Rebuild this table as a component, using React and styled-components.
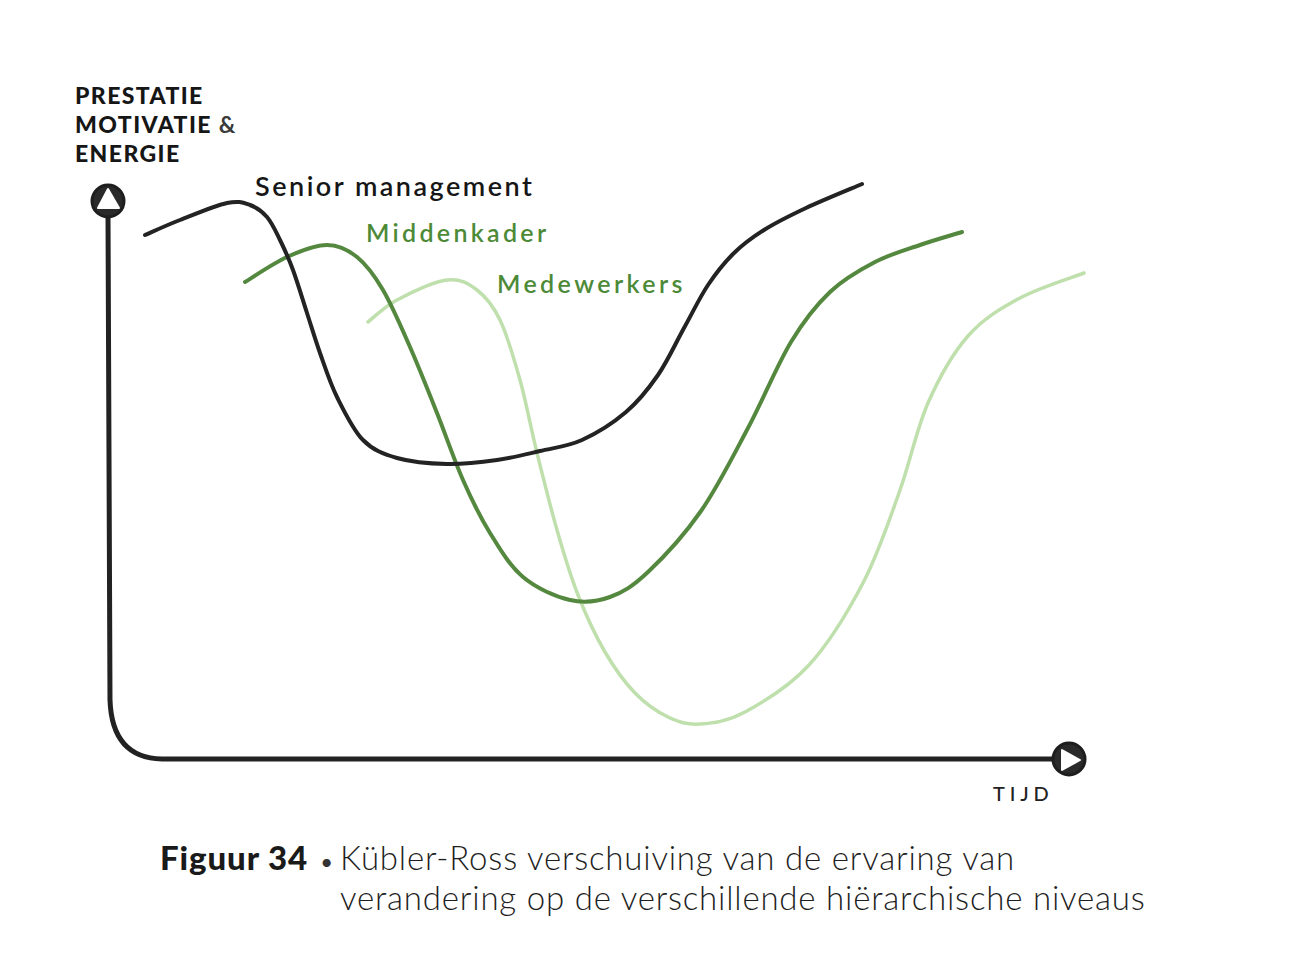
import React from "react";
import styled, { createGlobalStyle } from "styled-components";

const Global = createGlobalStyle`
  html, body { margin: 0; padding: 0; background: #ffffff; }
  body { font-family: "Lato", "Liberation Sans", sans-serif; color: #1c1c1c; }
`;

const Page = styled.div`
  width: 1300px;
  height: 973px;
  background: #ffffff;
  overflow: hidden;
`;

const AxisTitle = styled.div`
  padding: 81px 0 0 75px;
  font-size: 23px;
  line-height: 29px;
  font-weight: 900;
  letter-spacing: 1.4px;
  color: #161616;
`;

const Amp = styled.span`
  font-weight: 700;
  color: #3a3a3a;
`;

const Chart = styled.div`
  position: relative;
  width: 1300px;
  height: 660px;
`;

const Drawing = styled.svg`
  display: block;
`;

const Label = styled.div`
  position: absolute;
  left: ${(p) => p.$x}px;
  top: ${(p) => p.$y}px;
  font-size: ${(p) => p.$size}px;
  line-height: 1;
  font-weight: ${(p) => p.$weight || 600};
  color: ${(p) => p.$color || "#161616"};
  letter-spacing: ${(p) => p.$spacing || 0}px;
  white-space: nowrap;
`;

const Caption = styled.div`
  display: grid;
  grid-template-columns: 180px auto;
  justify-content: start;
  margin-top: 9px;
  padding-left: 160px;
  font-size: 33px;
  line-height: 40px;
  color: #1e1e1e;
`;

const CaptionLead = styled.div`
  display: flex;
  align-items: baseline;
  gap: 12px;
`;

const Fig = styled.span`
  font-weight: 900;
  color: #1a1a1a;
  letter-spacing: 0.9px;
`;

const Dot = styled.span`
  font-weight: 400;
  font-size: 22px;
  color: #333;
`;

const CaptionText = styled.div`
  font-weight: 300;
  letter-spacing: 0.8px;
`;

function smooth(pts) {
  let d = `M${pts[0][0]},${pts[0][1]}`;
  for (let i = 0; i < pts.length - 1; i++) {
    const p0 = pts[i - 1] || pts[i];
    const p1 = pts[i];
    const p2 = pts[i + 1];
    const p3 = pts[i + 2] || p2;
    const c1x = p1[0] + (p2[0] - p0[0]) / 6;
    const c1y = p1[1] + (p2[1] - p0[1]) / 6;
    const c2x = p2[0] - (p3[0] - p1[0]) / 6;
    const c2y = p2[1] - (p3[1] - p1[1]) / 6;
    d += ` C${c1x.toFixed(1)},${c1y.toFixed(1)} ${c2x.toFixed(1)},${c2y.toFixed(1)} ${p2[0]},${p2[1]}`;
  }
  return d;
}

const senior = [
  [145, 235], [180, 220], [227, 203], [250, 205], [267, 217], [280, 240],
  [293, 270], [307, 313], [320, 353], [337, 397], [363, 440], [397, 458],
  [447, 464], [497, 460], [540, 451], [582, 440], [626, 412], [658, 375],
  [684, 328], [708, 285], [733, 254], [764, 230], [806, 208], [862, 184],
];

const midden = [
  [245, 282], [287, 257], [327, 245], [357, 257], [383, 290], [410, 347],
  [437, 413], [463, 480], [490, 533], [523, 577], [570, 600], [610, 597],
  [648, 572], [701, 511], [748, 428], [791, 342], [830, 292], [875, 262],
  [920, 245], [962, 232],
];

const mede = [
  [368, 322], [397, 300], [447, 280], [477, 290], [500, 320], [520, 380],
  [537, 453], [557, 530], [578, 595], [605, 652], [635, 693], [668, 717],
  [700, 724], [745, 712], [809, 665], [863, 583], [899, 493], [928, 403],
  [968, 336], [1020, 298], [1084, 273],
];

export default function App() {
  return (
    <Page>
      <Global />
      <AxisTitle>
        PRESTATIE
        <br />
        MOTIVATIE <Amp>&amp;</Amp>
        <br />
        ENERGIE
      </AxisTitle>
      <Chart>
        <Drawing width="1300" height="660" viewBox="0 168 1300 660">
          <path
            d="M108,214 L110,700 Q112,758 162,759 L1054,759"
            fill="none"
            stroke="#222"
            strokeWidth="5"
            strokeLinecap="round"
          />
          <circle cx="108" cy="201" r="16" fill="#2a2a2a" stroke="#1e1e1e" strokeWidth="3" />
          <path d="M108,189 L98,208 L119,208 Z" fill="#fff" stroke="#fff" strokeWidth="2" strokeLinejoin="round" />
          <circle cx="1069" cy="759" r="16" fill="#2a2a2a" stroke="#1e1e1e" strokeWidth="3" />
          <path d="M1062,750 L1062,770 L1080,760 Z" fill="#fff" stroke="#fff" strokeWidth="2" strokeLinejoin="round" />
          <path d={smooth(mede)} fill="none" stroke="#bfe0ad" strokeWidth="3.5" strokeLinecap="round" />
          <path d={smooth(midden)} fill="none" stroke="#55883f" strokeWidth="4" strokeLinecap="round" />
          <path d={smooth(senior)} fill="none" stroke="#232323" strokeWidth="4" strokeLinecap="round" />
        </Drawing>
        <Label $x={255} $y={4} $size={27} $weight={600} $spacing={2.5}>
          Senior management
        </Label>
        <Label $x={366} $y={52} $size={25} $weight={600} $color="#4d8a38" $spacing={3.3}>
          Middenkader
        </Label>
        <Label $x={497} $y={103} $size={25} $weight={600} $color="#4d8a38" $spacing={3.4}>
          Medewerkers
        </Label>
        <Label $x={993} $y={615} $size={20} $weight={500} $color="#222" $spacing={4.8}>
          TIJD
        </Label>
      </Chart>
      <Caption>
        <CaptionLead>
          <Fig>Figuur 34</Fig>
          <Dot>•</Dot>
        </CaptionLead>
        <CaptionText>
          Kübler-Ross verschuiving van de ervaring van
          <br />
          verandering op de verschillende hiërarchische niveaus
        </CaptionText>
      </Caption>
    </Page>
  );
}
